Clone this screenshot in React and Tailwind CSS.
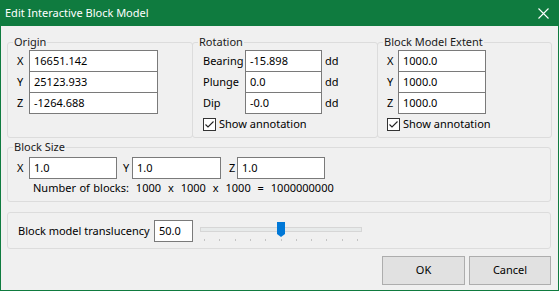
import React from "react";

// one text box, win32 look
const Box = ({ value, className = "" }) => (
  <div
    className={`h-[22px] border border-[#7a7a7a] bg-white pl-[4px] leading-[20px] whitespace-nowrap overflow-hidden ${className}`}
  >
    {value}
  </div>
);

const Group = ({ label, className = "", children }) => (
  <fieldset
    className={`border border-[#dcdcdc] rounded-[3px] ${className}`}
  >
    <legend className="ml-[5px] px-[1px] leading-[16px] h-[16px] text-[#1a1a1a]">{label}</legend>
    {children}
  </fieldset>
);

const Check = ({ label }) => (
  <div className="flex items-center h-[16px]">
    <svg width="13" height="13" viewBox="0 0 13 13" className="shrink-0">
      <rect x="0.5" y="0.5" width="12" height="12" fill="white" stroke="#333" />
      <path d="M2.5 6.5 L5 9 L10.5 3.5" fill="none" stroke="#222" strokeWidth="1.1" />
    </svg>
    <span className="ml-[3px] leading-[16px] whitespace-nowrap">{label}</span>
  </div>
);

const Slider = () => {
  const ticks = [];
  for (let i = 0; i < 11; i++) ticks.push(8 + i * 15.3);
  return (
    <svg width="170" height="20" viewBox="0 0 170 20" className="ml-[3px] shrink-0">
      <rect x="4.5" y="6.5" width="161" height="4" fill="#e7eaea" stroke="#d6d6d6" />
      {ticks.map((x, i) => (
        <rect key={i} x={Math.round(x)} y="18" width="1" height="2" fill="#c4c4c4" />
      ))}
      <path d="M81 1 L89 1 L89 13 L85 16 L81 13 Z" fill="#0078d7" />
    </svg>
  );
};

function App() {
  return (
    <div className="w-[559px] h-[291px] bg-[#f0f0f0] border border-[#0f7b3f] font-['Noto_Sans',sans-serif] text-[11px] text-black flex flex-col">
      <div className="h-[25px] bg-[#0f7b3f] text-white flex items-center justify-between pl-[4px] pr-[9px] shrink-0">
        <span className="leading-[16px] -mt-[1px] text-[11px]">Edit Interactive Block Model</span>
        <svg width="11" height="11" viewBox="0 0 11 11">
          <path d="M0.5 0.5 L10.5 10.5 M10.5 0.5 L0.5 10.5" stroke="white" strokeWidth="1.1" />
        </svg>
      </div>

      <div className="pl-[6px] pr-[6px] pt-[8px] flex flex-col">
        {/* top row of groups */}
        <div className="flex h-[104px]">
          <Group label="Origin" className="w-[186px] h-[104px]">
            <div className="pl-[9px] flex flex-col">
              {[
                ["X", "16651.142"],
                ["Y", "25123.933"],
                ["Z", "-1264.688"],
              ].map(([k, v], i) => (
                <div key={k} className={`flex items-center ${i > 0 ? "-mt-px" : ""}`}>
                  <span className="w-[12px]">{k}</span>
                  <Box value={v} className="w-[129px]" />
                </div>
              ))}
            </div>
          </Group>

          <Group label="Rotation" className="-ml-px w-[186px] h-[104px]">
            <div className="pl-[10px] flex flex-col">
              {[
                ["Bearing", "-15.898"],
                ["Plunge", "0.0"],
                ["Dip", "-0.0"],
              ].map(([k, v], i) => (
                <div key={k} className={`flex items-center ${i > 0 ? "-mt-px" : ""}`}>
                  <span className="w-[42px]">{k}</span>
                  <Box value={v} className="w-[77px]" />
                  <span className="ml-[3px]">dd</span>
                </div>
              ))}
              <div className="mt-[2px]">
                <Check label="Show annotation" />
              </div>
            </div>
          </Group>

          <Group label="Block Model Extent" className="-ml-px w-[175px] h-[104px]">
            <div className="pl-[9px] flex flex-col">
              {["X", "Y", "Z"].map((k, i) => (
                <div key={k} className={`flex items-center ${i > 0 ? "-mt-px" : ""}`}>
                  <span className="w-[11px]">{k}</span>
                  <Box value="1000.0" className="w-[88px]" />
                </div>
              ))}
              <div className="mt-[2px]">
                <Check label="Show annotation" />
              </div>
            </div>
          </Group>
        </div>

        {/* block size */}
        <Group label="Block Size" className="mt-[1px] w-[544px] h-[63px]">
          <div className="pl-[9px] mt-[2px] flex items-center">
            <span className="w-[12px]">X</span>
            <Box value="1.0" className="w-[88px] h-[21px]" />
            <span className="ml-[6px] w-[9px]">Y</span>
            <Box value="1.0" className="w-[89px] h-[21px]" />
            <span className="ml-[8px] w-[8px]">Z</span>
            <Box value="1.0" className="w-[88px] h-[21px]" />
          </div>
          <div className="pl-[25px] mt-[1px] h-[16px] leading-[16px] whitespace-pre [word-spacing:0.6px]">
            {"Number of blocks:  1000  x  1000  x  1000  =  1000000000"}
          </div>
        </Group>

        {/* translucency */}
        <div className="mt-[10px] w-[544px] h-[37px] border border-[#dcdcdc] rounded-[3px] flex items-center pl-[10px] pt-[1px]">
          <span className="w-[136px] leading-[16px] whitespace-nowrap">Block model translucency</span>
          <Box value="50.0" className="w-[39px] h-[20px] leading-[18px]" />
          <Slider />
        </div>

        {/* buttons */}
        <div className="mt-[7px] flex justify-end pr-[1px] gap-[4px]">
          <button className="w-[83px] h-[29px] bg-[#e1e1e1] border border-[#adadad]">OK</button>
          <button className="w-[82px] h-[29px] bg-[#e1e1e1] border border-[#adadad]">Cancel</button>
        </div>
      </div>
    </div>
  );
}

export default App;
